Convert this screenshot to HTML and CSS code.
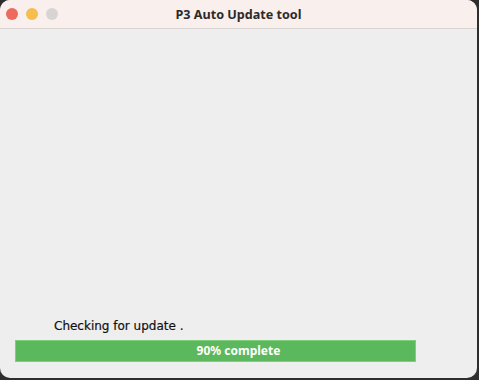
FILE: index.html
```html
<!DOCTYPE html>
<html lang="en">
<head>
    <meta charset="UTF-8">
    <title>P3 Auto Update tool</title>
    <link rel="stylesheet" href="styles.css">
</head>
<body>
    <div class="window">
        <div class="titlebar">
            <div class="lights">
                <span class="light close"></span>
                <span class="light minimize"></span>
                <span class="light zoom"></span>
            </div>
            <div class="title">P3 Auto Update tool</div>
        </div>

        <div class="content">
            <div class="status">Checking for update .</div>
            <div class="progress">
                <div class="progress-fill" style="width: 100%;">90% complete</div>
            </div>
        </div>
    </div>
</body>
</html>
```

FILE: styles.css
```css
* {
    margin: 0;
    padding: 0;
    box-sizing: border-box;
}

body {
    background-color: #2e2e2e;
    width: 479px;
    height: 380px;
    font-family: "DejaVu Sans", sans-serif;
}

.window {
    width: 477px;
    height: 378px;
    background-color: #eeeeee;
    border-radius: 10px;
    overflow: hidden;
    display: flex;
    flex-direction: column;
}

.titlebar {
    height: 29px;
    background-color: #f9efed;
    border-bottom: 1px solid #d9d3d2;
    display: flex;
    align-items: center;
    position: relative;
}

.lights {
    display: flex;
    gap: 8px;
    padding-left: 6px;
}

.light {
    width: 12px;
    height: 12px;
    border-radius: 50%;
}

.close {
    background-color: #ec6a5e;
}

.minimize {
    background-color: #f4bf4f;
}

.zoom {
    background-color: #d9d4d4;
}

.title {
    position: absolute;
    left: 0;
    right: 0;
    text-align: center;
    font-family: "Noto Sans", sans-serif;
    font-size: 12.6px;
    font-weight: bold;
    color: #2b2b2b;
}

.content {
    flex: 1;
    display: flex;
    flex-direction: column;
    justify-content: flex-end;
    padding: 0 61px 16px 15px;
}

.status {
    font-size: 12px;
    color: #111111;
    padding-left: 39px;
    margin-bottom: 7px;
    -webkit-text-stroke: 0.2px #111111;
}

.progress {
    height: 22px;
    background-color: #e6e6e6;
    border: 1px solid #7fcf7a;
}

.progress-fill {
    height: 100%;
    background-color: #5cb85c;
    color: white;
    font-family: "Noto Sans", sans-serif;
    font-size: 12px;
    font-weight: bold;
    text-align: center;
    line-height: 20px;
    padding-left: 46px;
}
```
